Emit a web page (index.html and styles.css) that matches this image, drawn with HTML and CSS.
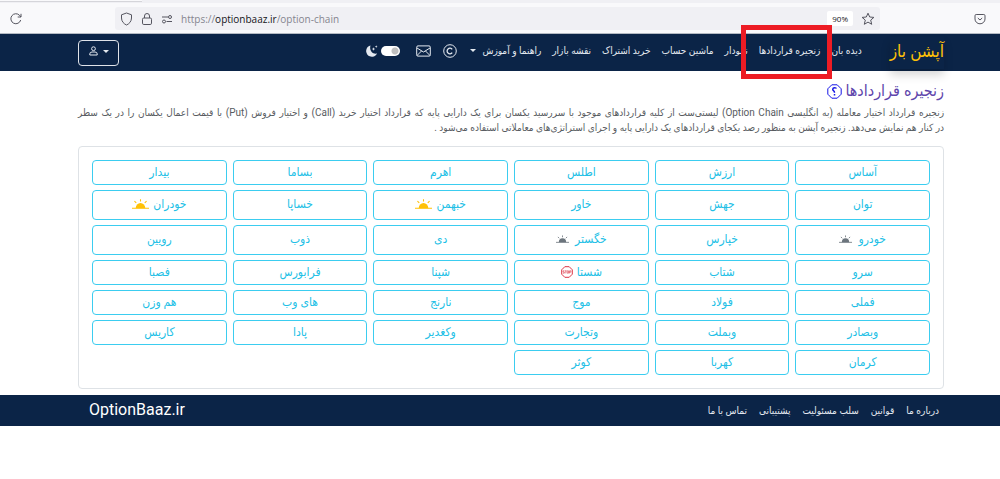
FILE: index.html
```html
<!DOCTYPE html>
<html lang="fa" dir="rtl">
<head>
<meta charset="utf-8">
<meta name="viewport" content="width=device-width, initial-scale=1">
<title>زنجیره قراردادها</title>
<link rel="stylesheet" href="styles.css">
</head>
<body>
<div class="browser" dir="ltr">
  <div class="tabstrip"><div class="tab"></div></div>
  <div class="toolbar">
    <button class="tool" aria-label="Reload"><svg width="14" height="14" viewBox="0 0 14 14"><path d="M11.7 8A5 5 0 1 1 10.5 3.3L12 5M12 1.8V5H8.7"/></svg></button>
    <div class="urlbar">
      <svg width="13" height="14" viewBox="0 0 13 14"><path d="M6.5 1 11.5 2.8V6C11.5 9.5 9 12 6.5 13 4 12 1.500 9.500 1.500 6V2.800Z"/></svg>
      <svg width="12" height="14" viewBox="0 0 12 14"><rect x="1.500" y="6" width="9" height="6.500" rx="1.300"/><path d="M3.500 6V4a2.500 2.500 0 0 1 5 0V6"/></svg>
      <svg width="12" height="12" viewBox="0 0 12 12"><path d="M1 4H7M5.500 8.500H11"/><circle cx="9" cy="4" r="1.500"/><circle cx="3" cy="8.500" r="1.500"/></svg>
      <div class="address"><span class="scheme">https://</span><b>optionbaaz.ir</b><span>/option-chain</span></div>
      <button class="zoom">90%</button>
      <button class="tool star" aria-label="Bookmark"><svg width="14" height="14" viewBox="0 0 14 14"><path d="M7 1.200 8.700 5 12.900 5.400 9.700 8.100 10.700 12.300 7 10.100 3.300 12.300 4.300 8.100 1.100 5.400 5.300 5Z"/></svg></button>
    </div>
    <button class="tool" aria-label="Pocket"><svg width="12" height="12" viewBox="0 0 12 12"><path d="M2.200 1.500H9.800Q11 1.500 11 2.700V6A5 4.800 0 0 1 1 6V2.700Q1 1.500 2.200 1.500ZM3.800 5 6 7 8.200 5"/></svg></button>
  </div>
</div>

<header class="navbar">
  <a class="brand" href="#">آپشن باز</a>
  <nav class="links">
    <a href="#">دیده بان</a>
    <a href="#" class="marked">زنجیره قراردادها</a>
    <a href="#">نمودار</a>
    <a href="#">ماشین حساب</a>
    <a href="#">خرید اشتراک</a>
    <a href="#">نقشه بازار</a>
    <a href="#" class="dropdown">راهنما و آموزش</a>
  </nav>
  <div class="actions">
    <a href="#" aria-label="حق نشر"><svg width="14" height="14" viewBox="0 0 14 14"><circle cx="7" cy="7" r="6.300"/><path d="M9.200 5.400A2.800 2.800 0 1 0 9.200 8.600" stroke-width="1.300"/></svg></a>
    <a href="#" aria-label="ایمیل"><svg width="15" height="12" viewBox="0 0 15 12"><rect x=".7" y=".9" width="13.600" height="10.200" rx="1.300"/><path d="M1 3 7.500 7 14 3M1 10.500 5.500 6M14 10.500 9.500 6"/></svg></a>
    <label class="theme">
      <input type="checkbox" class="switch" checked aria-label="حالت شب">
      <svg width="12" height="12" viewBox="0 0 12 12"><path class="solid" d="M4.500.5A5.700 5.700 0 1 0 11 8.500C6.500 9.500 3 5.500 4.500.5Z"/><path class="solid" d="M7.500 2.200 8 3.500 9.300 4 8 4.500 7.500 5.800 7 4.500 5.700 4 7 3.500ZM10.200.2 10.600 1.200 11.600 1.600 10.600 2 10.200 3 9.800 2 8.800 1.600 9.800 1.200Z"/></svg>
    </label>
  </div>
  <button class="user" aria-label="کاربر"><i class="caret"></i><svg width="9" height="10" viewBox="0 0 9 10"><circle cx="4.500" cy="2.700" r="1.900"/><path d="M.8 9V7.900Q.8 6 3 6H6Q8.200 6 8.200 7.900V9Z"/></svg></button>
</header>

<main class="page">
  <h1>زنجیره قراردادها
    <a href="#" class="help" aria-label="راهنما"><svg width="15" height="15" viewBox="0 0 15 15"><path d="M4.800.8H10.200L14.200 4.800V10.200L10.200 14.200H4.800L.8 10.200V4.800Z"/><path d="M5.700 5.300Q5.900 3.800 7.500 3.800 9.300 3.800 9.300 4.600M5.700 5.300Q5.700 6.300 6.700 6.900 7.500 7.400 7.500 8.700M7.500 10V11.400" stroke-width="1.500"/></svg></a>
  </h1>
  <p class="intro">زنجیره قرارداد اختیار معامله (به انگلیسی Option Chain) لیستی‌ست از کلیه قراردادهای موجود با سررسید یکسان برای یک دارایی پایه که قرارداد اختیار خرید (Call) و اختیار فروش (Put) با قیمت اعمال یکسان را در یک سطر در&nbsp;کنار&nbsp;هم&nbsp;نمایش می‌دهد. زنجیره آپشن به منظور رصد یکجای قراردادهای یک دارایی پایه و اجرای استراتژی‌های معاملاتی استفاده می‌شود .</p>

  <svg class="defs" width="0" height="0" aria-hidden="true">
    <symbol id="sun" viewBox="0 0 16 10"><path d="M3.500 8.500A4.500 5 0 0 1 12.500 8.500Z" fill="currentColor"/><path d="M0 8.500H16M8 0V2.200M2.300 1.800 4 3.500M13.700 1.800 12 3.500" stroke="currentColor"/></symbol>
    <symbol id="stop" viewBox="0 0 12 12"><path d="M3.800.7H8.200L11.300 3.800V8.200L8.200 11.300H3.800L.7 8.200V3.800Z" fill="none" stroke="currentColor"/><path d="M3.500 4.800H2V6H3.300V7.200H1.800M4 4.800H5.600M4.800 4.800V7.400M6.200 4.800H7.500V7.200H6.200ZM8.500 7.400V4.800H9.900V6.200H8.500" fill="none" stroke="currentColor" stroke-width=".6"/></symbol>
  </svg>
  <section class="symbols">
    <a href="#">آساس</a><a href="#">ارزش</a><a href="#">اطلس</a><a href="#">اهرم</a><a href="#">بساما</a><a href="#">بیدار</a>
    <a href="#">توان</a><a href="#">جهش</a><a href="#">خاور</a><a href="#">خبهمن <svg class="sun"><use href="#sun"/></svg></a><a href="#">خساپا</a><a href="#">خودران <svg class="sun"><use href="#sun"/></svg></a>
    <a href="#">خودرو <svg class="dim"><use href="#sun"/></svg></a><a href="#">خپارس</a><a href="#">خگستر <svg class="dim"><use href="#sun"/></svg></a><a href="#">دی</a><a href="#">ذوب</a><a href="#">رویین</a>
    <a href="#">سرو</a><a href="#">شتاب</a><a href="#">شستا <svg class="stop"><use href="#stop"/></svg></a><a href="#">شپنا</a><a href="#">فرابورس</a><a href="#">فصبا</a>
    <a href="#">فملی</a><a href="#">فولاد</a><a href="#">موج</a><a href="#">نارنج</a><a href="#">های وب</a><a href="#">هم وزن</a>
    <a href="#">وبصادر</a><a href="#">وبملت</a><a href="#">وتجارت</a><a href="#">وکغدیر</a><a href="#">پادا</a><a href="#">کاریس</a>
    <a href="#">کرمان</a><a href="#">کهربا</a><a href="#">کوثر</a>
  </section>
</main>

<footer class="footer">
  <nav><a href="#">درباره ما</a><a href="#">قوانین</a><a href="#">سلب مسئولیت</a><a href="#">پشتیبانی</a><a href="#">تماس با ما</a></nav>
  <a href="#" class="site" dir="ltr">OptionBaaz.ir</a>
</footer>
</body>
</html>
```

FILE: styles.css
```css
* { box-sizing: border-box; }
body { margin: 0; background: #fff; font-family: Roboto, "DejaVu Sans Condensed", "DejaVu Sans", sans-serif; font-size: 10px; }
a { color: inherit; text-decoration: none; }
button { font: inherit; color: inherit; background: none; border: 0; padding: 0; }
svg { display: block; fill: none; stroke: currentColor; }

.browser { background: #f9f9fb; border-bottom: 1px solid #b4bac3; color: #55555f; }
.tabstrip { height: 3px; background: #f0f0f4; }
.tab { width: 142px; height: 2px; background: #f9f9fb; border-bottom: 1px solid #d5d5da; }
.toolbar { display: flex; align-items: center; padding: 4px 14px 3px 9px; }
.urlbar { flex: 1; display: flex; align-items: center; gap: 8px; height: 23px; margin: 0 94px 0 92px; padding: 0 5px; background: #f0f0f4; border-radius: 3px; }
.address { flex: 1; font: 10px "Open Sans", sans-serif; color: #85858f; white-space: nowrap; }
.address b { font-weight: 400; color: #15141a; }
.zoom { padding: 0 5px; height: 15px; background: #fff; border-radius: 2px; font: 8px "Open Sans", sans-serif; color: #15141a; }

.navbar { display: flex; align-items: center; height: 37px; padding: 0 56px 0 78px; background: #0b2447; color: #e4e9f0; }
.brand { padding-bottom: 4px; color: #ffc107; font-size: 17px; line-height: 28px; box-shadow: 0 6px 10px rgba(0, 0, 0, .16); }
.links { display: flex; gap: 11px; margin-right: 28px; padding-bottom: 3px; font-size: 10px; line-height: 16px; white-space: nowrap; }
.marked { position: relative; }
.marked::after { content: ""; position: absolute; inset: -18px -12px -20px -18px; border: 5px solid #ed1c24; z-index: 2; }
.dropdown::after { content: ""; display: inline-block; margin-right: 6px; border: 3px solid transparent; border-top-color: currentColor; border-bottom: 0; vertical-align: 2px; }
.actions { display: flex; align-items: center; gap: 12px; margin-right: 13px; padding-bottom: 3px; }
.theme { display: flex; align-items: center; gap: 3px; margin-right: 4px; }
.solid { fill: currentColor; stroke: none; }
.switch { appearance: none; width: 19px; height: 10px; margin: 0; border-radius: 5px; background: radial-gradient(circle at 14px 5px, #bfbfbf 3px, #fff 4px); }
.user { display: flex; align-items: center; justify-content: center; gap: 5px; width: 41px; height: 26px; margin-right: auto; padding-bottom: 3px; border: 1px solid #dfe3e9; border-radius: 4px; }
.caret { border: 3px solid transparent; border-top-color: currentColor; border-bottom: 0; }

.page { padding: 10px 56px 6px 78px; }
h1 { display: flex; align-items: center; gap: 3px; margin: 0; color: #5e45ab; font-size: 16px; font-weight: 500; line-height: 20px; }
.help { color: #1414e6; }
.intro { margin: 4px 0 11px; color: #585c61; font-size: 10px; line-height: 15px; text-align: justify; }
.defs { position: absolute; }
.symbols { display: grid; grid-template-columns: repeat(6, 1fr); grid-template-rows: 25px 30px 30px; grid-auto-rows: 25px; gap: 5px 6px; padding: 13px; border: 1px solid #dee2e6; border-radius: 4px; }
.symbols a { display: flex; align-items: center; justify-content: center; gap: 4px; padding-bottom: 2px; border: 1px solid #3bcdf0; border-radius: 4px; color: #22bfe6; font-size: 12px; }
.symbols svg { stroke: none; }
.symbols .sun { width: 17px; height: 11px; color: #ffc107; }
.symbols .dim { width: 13px; height: 9px; margin-right: 2px; color: #6c757d; }
.symbols .stop { width: 12px; height: 12px; color: #dc3545; }

.footer { display: flex; align-items: center; justify-content: space-between; height: 31px; padding: 0 61px 0 89px; background: #0b2447; color: #e4e9f0; }
.footer nav { display: flex; gap: 12px; font-size: 10px; }
.site { padding-bottom: 3px; font-size: 16px; color: #fff; }
```
